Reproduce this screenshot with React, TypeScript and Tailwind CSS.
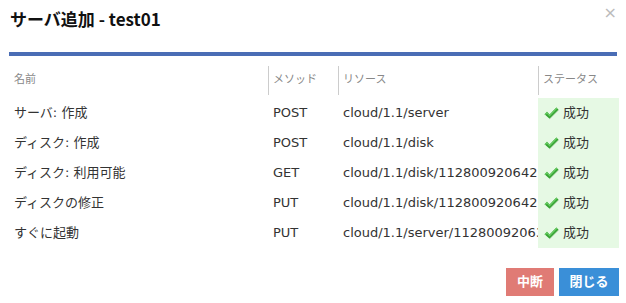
import React from 'react';

type Row = {
  name: string;
  method: string;
  resource: string;
};

const ROWS: Row[] = [
  { name: 'サーバ: 作成', method: 'POST', resource: 'cloud/1.1/server' },
  { name: 'ディスク: 作成', method: 'POST', resource: 'cloud/1.1/disk' },
  { name: 'ディスク: 利用可能', method: 'GET', resource: 'cloud/1.1/disk/112800920642' },
  { name: 'ディスクの修正', method: 'PUT', resource: 'cloud/1.1/disk/112800920642' },
  { name: 'すぐに起動', method: 'PUT', resource: 'cloud/1.1/server/112800920634' },
];

function CheckIcon() {
  return (
    <svg width="15" height="13" viewBox="0 0 15 13" className="shrink-0">
      <path d="M0.5 7.2 L3 4.8 L5.6 7.4 L12.4 0.6 L14.6 2.8 L5.6 11.8 Z" fill="#36a332" />
      <path d="M0.5 7.2 L3 4.8 L5.6 7.4 L12.4 0.6 L13.4 1.6 L5.6 9.4 L3 6.8 L1.4 8.1 Z" fill="#69cc64" />
      <path d="M5.6 11.8 L14.6 2.8 L14.6 3.6 L5.6 12.6 Z" fill="#b9d9b5" />
    </svg>
  );
}

export default function App() {
  // latin glyphs Verdana-like, kana/kanji from Noto CJK
  const font = "font-['DejaVu_Sans','Noto_Sans_CJK_JP',sans-serif]";

  return (
    <div className={`w-[626px] h-[303px] bg-white text-[#333] ${font} overflow-hidden`}>
      {/* Header */}
      <div className="relative px-[10px] pt-[7px] h-[52px]">
        <h1 className="text-[17px] font-bold leading-[24px] text-[#111] font-['Noto_Sans_CJK_JP',sans-serif]">
          サーバ追加 - test01
        </h1>
        <span className="absolute right-[9px] top-[5px] text-[16px] leading-[16px] text-[#bbb]">×</span>
      </div>
      <div className="mx-[9px] h-[4px] bg-[#4a6db5]" />

      {/* Table */}
      <table className="ml-[9px] mt-[8px] w-[610px] table-fixed border-collapse text-[13px]">
        <colgroup>
          <col className="w-[259px]" />
          <col className="w-[70px]" />
          <col className="w-[200px]" />
          <col className="w-[81px]" />
        </colgroup>
        <thead>
          <tr className="h-[34px] align-top text-[11px] text-[#888]">
            <th className="p-0 pt-[2px] text-left font-normal">
              <div className="flex h-[29px] items-center pl-[5px]">名前</div>
            </th>
            <th className="p-0 pt-[2px] text-left font-normal">
              <div className="flex h-[29px] items-center border-l border-[#ccc] pl-[4px]">メソッド</div>
            </th>
            <th className="p-0 pt-[2px] text-left font-normal">
              <div className="flex h-[29px] items-center border-l border-[#ccc] pl-[4px]">リソース</div>
            </th>
            <th className="p-0 pt-[2px] text-left font-normal">
              <div className="flex h-[29px] items-center border-l border-[#ccc] pl-[4px]">ステータス</div>
            </th>
          </tr>
        </thead>
        <tbody>
          {ROWS.map((row, i) => (
            <tr key={i} className="h-[30px]">
              <td className="p-0 pl-[5px]">{row.name}</td>
              <td className="p-0 pl-[5px]">{row.method}</td>
              <td className="p-0 pl-[5px] overflow-hidden whitespace-nowrap">{row.resource}</td>
              <td className="p-0 bg-[#e6f9e4]">
                <div className="flex items-center gap-[4px] pl-[6px]">
                  <CheckIcon />
                  <span>成功</span>
                </div>
              </td>
            </tr>
          ))}
        </tbody>
      </table>

      {/* Footer */}
      <div className="mt-[20px] flex justify-end gap-[5px] pr-[7px]">
        <button type="button" className="h-[28px] w-[48px] bg-[#e07b75] text-[13px] font-bold text-white">
          中断
        </button>
        <button type="button" className="h-[28px] w-[60px] bg-[#3a8fd8] text-[13px] font-bold text-white">
          閉じる
        </button>
      </div>
    </div>
  );
}
